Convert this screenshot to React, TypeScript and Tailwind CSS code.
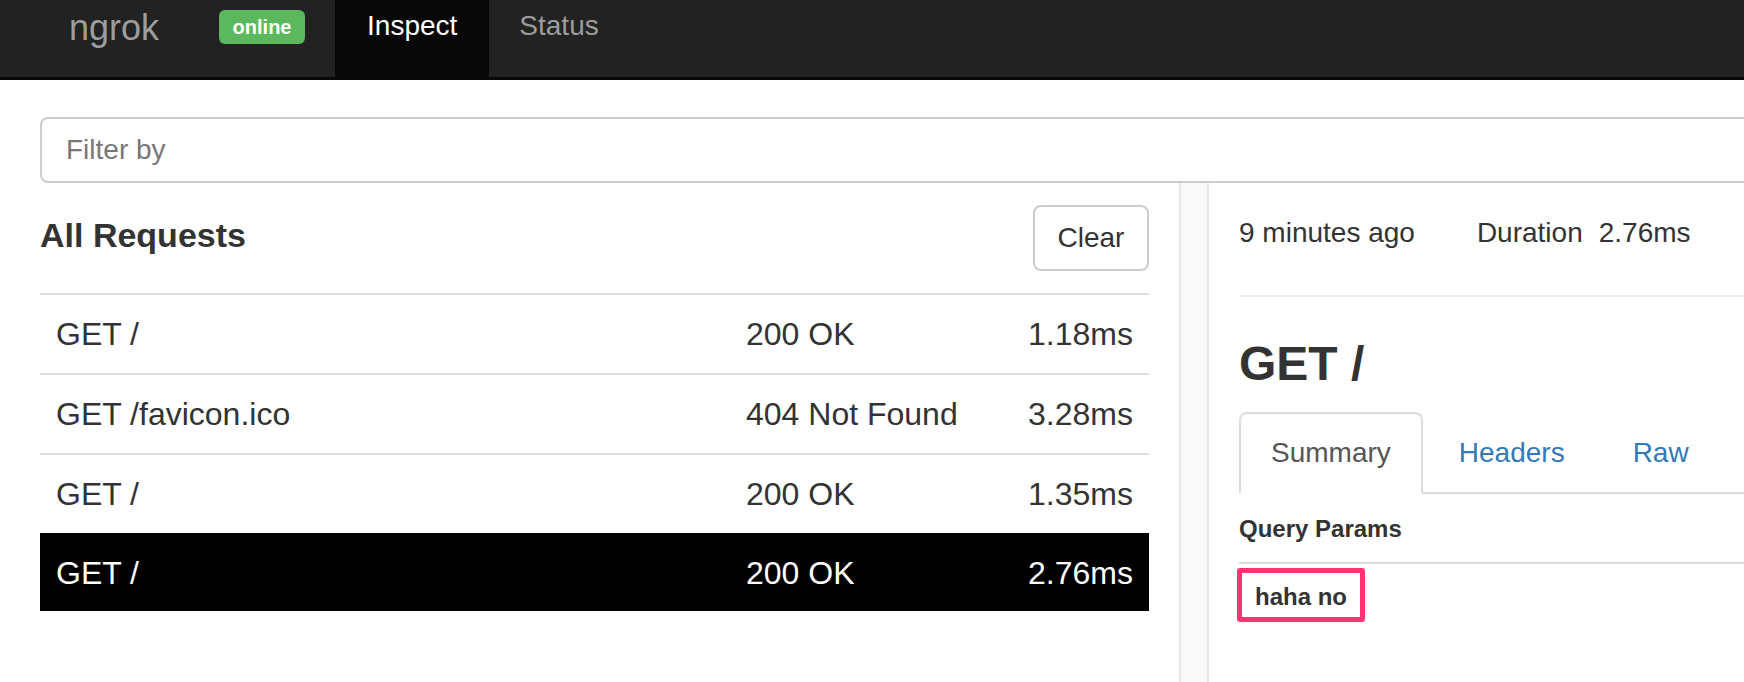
const requests = [
  { path: "GET /", status: "200 OK", duration: "1.18ms" },
  { path: "GET /favicon.ico", status: "404 Not Found", duration: "3.28ms" },
  { path: "GET /", status: "200 OK", duration: "1.35ms" },
  { path: "GET /", status: "200 OK", duration: "2.76ms", selected: true },
];

function Navbar() {
  return (
    <nav className="flex h-[80px] items-start border-b-[3px] border-[#080808] bg-[#222222]">
      <span className="ml-[69px] mt-[10px] text-[36px] leading-[36px] text-[#9d9d9d]">ngrok</span>
      <span className="ml-[60px] mt-[10px] flex h-[34px] w-[86px] items-center justify-center rounded-[6px] bg-[#5cb85c] text-[20px] font-bold text-white">
        online
      </span>
      <a className="ml-[30px] h-full bg-[#080808] px-[32px] pt-[6px] text-[28px] leading-[40px] text-white">
        Inspect
      </a>
      <a className="h-full px-[30px] pt-[6px] text-[28px] leading-[40px] text-[#9d9d9d]">Status</a>
    </nav>
  );
}

function RequestList() {
  return (
    <section className="ml-10 w-[1109px] shrink-0">
      <div className="flex items-center justify-between py-[22px]">
        <h3 className="mb-[6px] text-[34px] font-bold leading-[40px]">All Requests</h3>
        <button className="h-[66px] w-[116px] rounded-[8px] border-2 border-[#cccccc] bg-white text-[28px]">
          Clear
        </button>
      </div>
      <div>
        {requests.map((r, i) => (
          <div
            key={i}
            className={
              r.selected
                ? "flex h-[78px] items-center border-t-2 border-black bg-black px-4 text-[32px] text-white"
                : "flex h-[80px] items-center border-t-2 border-[#dddddd] px-4 text-[32px]"
            }
          >
            <span className="w-[690px]">{r.path}</span>
            <span className="flex-1">{r.status}</span>
            <span className="text-right">{r.duration}</span>
          </div>
        ))}
      </div>
    </section>
  );
}

function RequestDetail() {
  return (
    <section className="flex-1 pl-[30px]">
      <div className="flex pt-[30px] text-[28px] leading-[40px]">
        <span>9 minutes ago</span>
        <span className="ml-[62px]">Duration</span>
        <span className="ml-[16px]">2.76ms</span>
      </div>
      <hr className="mt-[42px] border-t-2 border-[#eeeeee]" />
      <h1 className="mt-[40px] text-[48px] font-bold leading-[53px]">GET /</h1>
      <ul className="mt-[22px] flex border-b-2 border-[#dddddd] text-[28px] leading-[40px]">
        <li className="-mb-[2px] mr-[4px] rounded-t-[8px] border-2 border-[#dddddd] border-b-transparent bg-white px-[30px] py-[19px] text-[#555555]">
          Summary
        </li>
        <li className="-mb-[2px] mr-[4px] border-2 border-transparent px-[30px] py-[19px] text-[#337ab7]">Headers</li>
        <li className="-mb-[2px] mr-[4px] border-2 border-transparent px-[30px] py-[19px] text-[#337ab7]">Raw</li>
      </ul>
      <h4 className="mt-[18px] border-b-2 border-[#dddddd] pb-[16px] text-[24px] font-semibold leading-[34px]">
        Query Params
      </h4>
      <div className="mt-[4px] flex">
        <span className="-ml-[2px] rounded-[3px] border-[5px] border-[#ff3573] px-[13px] pt-[4px] text-[24px] font-bold leading-[40px]">
          haha no
        </span>
      </div>
    </section>
  );
}

export default function App() {
  return (
    <div className="h-[682px] w-full overflow-hidden bg-white font-['Liberation_Sans',Arial,sans-serif] text-[#333333]">
      <Navbar />
      <div className="w-[1800px]">
        <div className="pl-10 pt-[37px]">
          <input
            className="h-[66px] w-full rounded-[8px] border-2 border-[#cccccc] px-[24px] text-[28px] outline-none placeholder:text-[#777777]"
            placeholder="Filter by"
          />
        </div>
        <div className="flex h-[500px]">
          <RequestList />
          <div className="ml-[30px] w-[30px] shrink-0 border-x-2 border-[#e7e7e7] bg-[#f9f9f9]" />
          <RequestDetail />
        </div>
      </div>
    </div>
  );
}
